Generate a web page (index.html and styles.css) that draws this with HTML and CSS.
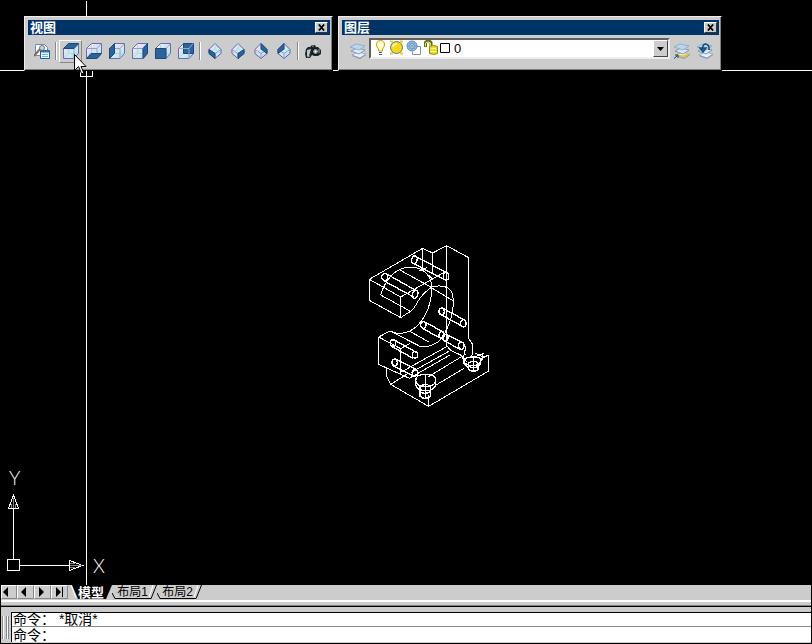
FILE: index.html
```html
<!DOCTYPE html>
<html lang="zh-CN">
<head>
<meta charset="utf-8">
<title>模型</title>
<link rel="stylesheet" href="styles.css">
</head>
<body>
<svg class="defs" aria-hidden="true">
  <defs>
    <linearGradient id="glass" x1="0" y1="0" x2="1" y2="1">
      <stop offset="0" stop-color="#fff"/><stop offset=".4" stop-color="#e0dcf8"/><stop offset=".6" stop-color="#c4f0f0"/><stop offset="1" stop-color="#ccc8f0"/>
    </linearGradient>
    <g id="cube">
      <path d="M.5 5.500 5.500.5h10v10l-4.500 5H.5z" fill="url(#glass)" stroke="#6c6cac"/>
      <path d="M1 15l4.500-4.500H15M5.500 1v9.500" fill="none" stroke="#a8dce0"/>
      <path d="M.5 5.500H11v10M11 5.500l4.500-5" fill="none" stroke="#9c9ccc"/>
    </g>
    <g id="gem">
      <path d="M8 .5 14 6.500v4L8 15.500l-6-5v-4z" fill="url(#glass)" stroke="#6464a4"/>
      <path d="M2 6.500 8 10.500l6-4M8 10.500v5" fill="none" stroke="#9494c4"/>
      <path d="M8 1v5M8 6l-5 4M8 6l5 4" fill="none" stroke="#a8e0e0"/>
    </g>
    <g id="sheets">
      <path d="M2 13l6-3 8 2-6 4z" fill="#7c98b4"/><path d="M2 12l6-3 8 2-6 4z" fill="#e4f0fc" stroke="#7890ac" stroke-width=".6"/>
      <path d="M1 8l6-3 8 2-6 4z" fill="#dce8f8" stroke="#6c8cac" stroke-width=".8"/>
      <path d="M0 4l6-3 9 2-6 4z" fill="#b8d8ec" stroke="#88a4c0" stroke-width=".8"/>
    </g>
  </defs>
</svg>

<main class="canvas">
  <i class="cross-v"></i><i class="cross-h"></i><i class="pickbox"></i>

  <svg class="part" viewBox="0 0 420 540" role="img" aria-label="零件">
    <path d="M28 133 188 40l30 14 42-22 66 36v242M28 133v63l94 52v-62zM122 186l138-78M188 40v60M218 54v60M260 32v300M122 248l28-18"/>
    <path d="M150 230q12-8 22-28 16-28 44-46 30-8 50 4 16 12 14 50-4 60-42 108-26 20-58 17M62 180l8-22q20-44 56-58 36-8 62 5 20 14 26 40 6 50-20 98-20 34-46 46-20 8-38 6"/>
    <path d="M62 180l88 48M80 142l40 22M118 104l94 52M214 158l66 40M178 108l22-10M216 130l-34-30M148 288l60 34"/>
    <path class="bold" d="M158 84l95 50M169 66l92 47M69 136l92 50M80 117l89 50M241 238l66 36M249 220l66 36M186 279l52 29M196 262l56 30M252 317l48 26M260 299l50 25M95 334l64 36M105 316l64 36M100 392l58 30M109 374l60 30"/>
    <g class="bold"><ellipse cx="163" cy="74" rx="8" ry="12" transform="rotate(20 163 74)"/><ellipse cx="258" cy="124" rx="8" ry="11"/><ellipse cx="74" cy="126" rx="9" ry="10"/><ellipse cx="165" cy="178" rx="8" ry="12" transform="rotate(20 165 178)"/><ellipse cx="245" cy="229" rx="8" ry="10"/><ellipse cx="310" cy="265" rx="8" ry="11"/><ellipse cx="190" cy="270" rx="8" ry="10"/><ellipse cx="245" cy="300" rx="8" ry="10"/><ellipse cx="256" cy="308" rx="8" ry="10"/><ellipse cx="304" cy="332" rx="8" ry="11"/><ellipse cx="99" cy="324" rx="8" ry="10"/><ellipse cx="165" cy="359" rx="8" ry="10"/><ellipse cx="104" cy="382" rx="8" ry="10"/><ellipse cx="165" cy="413" rx="8" ry="10"/></g>
    <path d="M90 288l90 46M56 306l34-18 20 7M56 306v82l92 42M56 306l66 35v78M122 341l28-16M80 397v28l12 23 114 66 180-106v-48l-16 6-24-12M92 448l48-30M122 412l140-78M148 430l122-70M154 412l114-64M205 425l113-68M228 450l84-50M206 480v34"/>
    <path d="M326 310l12 18v30l-12 12M260 332l12 14 30 14 8 14M318 334l-8 34 10 12M340 368l32-14M364 372l22-12M366 356v20"/>
    <path class="bold" d="M167 436q0-18 30-18t30 18-30 18-30-18zM167 436v12q0 16 30 20 30-4 30-20v-12M180 454v30q14 12 31 0v-30q-16-12-31 0zM180 470q16 10 31 0M196 418v70"/>
    <path class="bold" d="M312 378q0-12 28-12t22 12q-2 12-24 14-24-2-26-14zM326 384v20q14 10 28 0v-20q-14-10-28 0zM312 378v8l14 12M362 378v8l-8 10M326 394q14 8 28 0M340 366v42"/>
  </svg>

  <svg class="ucs" viewBox="0 0 120 125" role="img" aria-label="UCS">
    <path d="M13.500 99V48M20 105.500h49M7.500 99.500h12v11h-12zM8.500 48.500h10L13.500 35zM69.500 100.500v10l13-5z"/>
    <path class="dim" d="M13.500 38v10M11.500 44v4M15.500 44v4M70 105.500h12M70 103.500h5M70 107.500h5"/>
    <text x="9" y="25">Y</text><text x="93" y="113">X</text>
  </svg>

  <section class="toolbar view" aria-label="视图">
    <header class="title"><span>视图</span><button class="close" aria-label="关闭"><svg viewBox="0 0 8 7"><path d="M1 0l6 7M7 0L1 7"/></svg></button></header>
    <div class="tools">
      <button class="tool" aria-label="命名视图"><svg viewBox="0 0 16 16"><path d="M1.500 1.500h9l3 3v8h-12z" fill="#fff" stroke="#6090c0"/><path d="M0 13l6-7" stroke="#8c6848" stroke-width="2"/><circle cx="8" cy="5" r="2.500" fill="#c8d4dc" stroke="#847464"/><path d="M6.500 7.500h9v8h-9z" fill="#e8f8ff" stroke="#24589c"/><path d="M7 8.500h8" stroke="#3474b4" stroke-width="2"/><path d="M8 11.500h6M8 13.500h6" stroke="#74b4dc"/></svg></button>
      <i class="sep"></i>
      <button class="tool raised" aria-label="俯视图"><svg viewBox="0 0 16 16"><use href="#cube"/><path class="face" d="M.5 5.500 5.500.5h10L11 5.500z"/></svg></button>
      <button class="tool" aria-label="仰视图"><svg viewBox="0 0 16 16"><use href="#cube"/><path class="face" d="M.5 15.500 5 10.500h10.500l-4.500 5z"/></svg></button>
      <button class="tool" aria-label="左视图"><svg viewBox="0 0 16 16"><use href="#cube"/><path class="face" d="M.5 5.500 5.500.5v10l-5 5z"/></svg></button>
      <button class="tool" aria-label="右视图"><svg viewBox="0 0 16 16"><use href="#cube"/><path class="face" d="M11 5.500 15.500.5v10l-4.500 5z"/></svg></button>
      <button class="tool" aria-label="主视图"><svg viewBox="0 0 16 16"><use href="#cube"/><path class="face" d="M.5 5.500H11v10H.5z"/></svg></button>
      <button class="tool" aria-label="后视图"><svg viewBox="0 0 16 16"><use href="#cube"/><path class="face" d="M5.500.5h10v10h-10z"/><path d="M1 5.500h10v10M11 5.500l4-5" fill="none" stroke="#8cb0d8"/></svg></button>
      <i class="sep"></i>
      <button class="tool" aria-label="西南等轴测"><svg viewBox="0 0 16 16"><use href="#gem"/><path class="face" d="M2 6.500 8 10.500v5l-6-5z"/></svg></button>
      <button class="tool" aria-label="东南等轴测"><svg viewBox="0 0 16 16"><use href="#gem"/><path class="face" d="M14 6.500 8 10.500v5l6-5z"/></svg></button>
      <button class="tool" aria-label="东北等轴测"><svg viewBox="0 0 16 16"><use href="#gem"/><path class="face" d="M8 .5 14 6.500v4L8 6z"/></svg></button>
      <button class="tool" aria-label="西北等轴测"><svg viewBox="0 0 16 16"><use href="#gem"/><path class="face" d="M8 .5 2 6.500v4L8 6z"/></svg></button>
      <i class="sep"></i>
      <button class="tool" aria-label="相机"><svg viewBox="0 0 16 16"><path d="M1 6l2-2h2l2-2h3l1 2h2l3 3v4l-3 2h-4l-2-1-2 3H1L0 11z" fill="#202428"/><path d="M2 7v6h2l2-7z" fill="#b8c8cc"/><circle cx="10.500" cy="8.500" r="3" fill="#8ca4a4" stroke="#000"/><circle cx="10.500" cy="8.500" r="1" fill="#fff"/><path d="M14 6v4M7 3h2M2 14l3-1" stroke="#98a8a8"/></svg></button>
    </div>
  </section>

  <section class="toolbar layers" aria-label="图层">
    <header class="title"><span>图层</span><button class="close" aria-label="关闭"><svg viewBox="0 0 8 7"><path d="M1 0l6 7M7 0L1 7"/></svg></button></header>
    <div class="tools">
      <button class="tool" aria-label="图层特性管理器"><svg viewBox="0 0 16 16"><use href="#sheets"/></svg></button>
      <div class="combo">
        <select aria-label="图层"><option>0</option></select>
        <svg class="state" viewBox="0 0 76 16" aria-hidden="true">
          <path d="M2.500 5q0-4.500 4-4.500t4 4.500q0 2-2 4v2h-4V9q-2-2-2-4z" fill="#fffcc0" stroke="#c8a018"/><path d="M5 12.500h3M5 14.500h3" stroke="#505878"/><path d="M5 4l1.500 3L8 4" fill="none" stroke="#fff"/>
          <path d="M16 1.500h3M26 1.500h3M16 13.500h3M26 13.500h3" stroke="#f0cc20" stroke-width="2"/><circle cx="22.500" cy="7.500" r="6" fill="#ffd414" stroke="#4880a0"/><path d="M19 7q0-3 4-3" fill="none" stroke="#fff49c" stroke-width="2"/>
          <path d="M40.500 6.500h6v8h-8v-3" fill="#fff" stroke="#8494b0"/><circle cx="38" cy="6" r="5" fill="#94bce4" stroke="#6090bc"/><circle cx="38" cy="6" r="2.500" fill="#d8f0f8" stroke="#6094bc"/><path d="M38 1v10M33 6h10M35 3l6 6M41 3l-6 6" stroke="#7498c0" stroke-width=".7"/>
          <path d="M51.500 7V2.500Q54-.5 57 2.500V6" fill="none" stroke="#606c18" stroke-width="3"/><path d="M51.500 6.500V3Q54 .5 56.500 3v3" fill="none" stroke="#dcec48"/><path d="M55.500 6.500q4-2 8 0v7q-4 2-8 0z" fill="#e8dc24" stroke="#908c14"/><path d="M57 8.500h5M57 11.500h5" stroke="#fffca0"/>
          <path d="M66.500 3.500h9v9h-9z" fill="#fff" stroke="#000"/>
        </svg>
        <svg class="drop" viewBox="0 0 13 15" aria-hidden="true"><path d="M3 6h7L6.500 10z"/></svg>
      </div>
      <button class="tool" aria-label="置为当前图层"><svg viewBox="0 0 16 16"><use href="#sheets"/><path d="M3 11l6 1.500 6-3 1 1-6 4-8-2z" fill="#f0c818"/><path d="M0 15.500l3.500-3M1 12h3v3" stroke="#104478" fill="none"/></svg></button>
      <button class="tool" aria-label="上一个图层"><svg viewBox="0 0 16 16"><use href="#sheets"/><path d="M12 7V4q-1-3-4-3-3 1-2 6M3 5l3 4 3-4z" stroke="#104c80" stroke-width="1.500" fill="none"/></svg></button>
    </div>
  </section>

  <svg class="cursor" viewBox="0 0 13 20" aria-hidden="true"><path d="M.5.5v16l4-4 3 7h2.500l-3-7H12z" fill="#fff" stroke="#000"/></svg>
</main>

<nav class="tabs" aria-label="布局">
  <button class="nav" aria-label="第一个"><svg viewBox="0 0 15 12"><path d="M6 1v10L1 6z"/></svg></button>
  <button class="nav" aria-label="上一个"><svg viewBox="0 0 15 12"><path d="M8 1v10L3 6z"/></svg></button>
  <button class="nav" aria-label="下一个"><svg viewBox="0 0 15 12"><path d="M4 1v10l5-5z"/></svg></button>
  <button class="nav" aria-label="最后一个"><svg viewBox="0 0 15 12"><path d="M4 1v10l5-5zM10 1h1v10h-1z"/></svg></button>
  <button class="tab active"><svg viewBox="0 0 42 15" preserveAspectRatio="none"><path d="M2 0h40l-6 14H8z"/><path class="edge" d="M1 0l5 13"/></svg><span>模型</span></button>
  <button class="tab"><svg viewBox="0 0 46 15" preserveAspectRatio="none"><path class="edge" d="M42 0l-4 12"/><path class="line" d="M0 8l3 5.500h37L45.500 0"/></svg><span>布局1</span></button>
  <button class="tab"><svg viewBox="0 0 46 15" preserveAspectRatio="none"><path class="edge" d="M42 0l-4 12"/><path class="line" d="M0 8l3 5.500h37L45.500 0"/></svg><span>布局2</span></button>
</nav>
<div class="splitter"></div>
<section class="command">
  <i class="grip"></i>
  <div class="lines">
    <p class="history">命令：&nbsp;*取消*</p>
    <div class="prompt"><label for="cmd">命令：</label><input id="cmd" type="text"></div>
  </div>
</section>
</body>
</html>
```
FILE: styles.css
```css
* { box-sizing: border-box; }
body {
  margin: 0; min-height: 100vh; padding: 0 1px 1px;
  display: flex; flex-direction: column;
  background: #000; color: #000;
  font: 12px/15px "Liberation Sans", "Noto Sans CJK SC", sans-serif;
}
button { margin: 0; padding: 0; border: 0; background: none; font: inherit; color: inherit; }
svg { display: block; }
.defs { position: absolute; width: 0; height: 0; }

.canvas { position: relative; flex: 1; min-height: 480px; margin: 0 -1px; overflow: hidden; }
.cross-v { position: absolute; left: 86px; top: 1px; bottom: 0; width: 1px; background: #fff; }
.cross-h { position: absolute; top: 70px; left: 0; right: 0; height: 1px; background: #fff; }
.pickbox { position: absolute; left: 80px; top: 64px; width: 13px; height: 13px; border: 1px solid #fff; }
.part { position: absolute; left: 360px; top: 235px; width: 140px; height: 180px; shape-rendering: crispEdges; }
.part path, .part ellipse { fill: none; stroke: #fff; stroke-width: 3; }
.part .bold, .part .bold ellipse { stroke-width: 4; }
.ucs { position: absolute; left: 0; bottom: 0; width: 120px; height: 125px; }
.ucs path { fill: none; stroke: #fff; shape-rendering: crispEdges; }
.ucs .dim { stroke: #888; }
.ucs text { fill: #fff; font: 300 19px Lato, sans-serif; }
.cursor { position: absolute; left: 74px; top: 54px; width: 13px; height: 20px; }

.toolbar {
  position: absolute; top: 16px; height: 55px; padding: 3px 2px 0 3px;
  background: #ccc; border: 1px solid; border-color: #eee #000 #000 #eee;
  box-shadow: inset -1px -1px #808080;
}
.view { left: 24px; width: 309px; }
.layers { left: 338px; width: 384px; }
.title {
  display: flex; align-items: center; justify-content: space-between;
  height: 15px; padding: 0 2px; background: #003366; color: #fff;
  font-weight: 700; font-size: 13px;
}
.close {
  width: 13px; height: 11px; padding: 1px 2px; background: #ccc;
  border: 1px solid; border-color: #fff #333 #333 #fff;
}
.close svg { width: 7px; height: 7px; }
.close path { stroke: #000; stroke-width: 2; }
.tools { display: flex; align-items: center; height: 32px; padding-left: 2px; }
.layers .tools { padding: 0 3px 0 4px; }
.tool { width: 23px; height: 23px; display: grid; place-items: center; border: 1px solid transparent; }
.tool svg { width: 16px; height: 16px; }
.raised { border-color: #fff #888 #888 #fff; }
.face { fill: #2c6498; stroke: #1c4880; }
.sep { width: 2px; height: 18px; margin: 0 2px; border-left: 1px solid #888; border-right: 1px solid #fff; }

.combo { position: relative; flex: 1; height: 21px; margin-bottom: 5px; }
.combo select {
  appearance: none; width: 100%; height: 100%; padding: 0 18px 0 83px;
  border: 2px solid; border-color: #606060 #eee #eee #606060; border-radius: 0;
  background: #fff; color: #000; font: 13px "Liberation Sans", sans-serif;
}
.state { position: absolute; left: 5px; top: 2px; width: 76px; height: 16px; pointer-events: none; }
.drop {
  position: absolute; right: 2px; top: 2px; width: 15px; height: 17px; pointer-events: none;
  background: #ccc; border: 1px solid; border-color: #fff #444 #444 #fff;
}

.tabs { display: flex; height: 15px; background: #ccc; }
.nav { width: 17px; height: 14px; border: 1px solid; border-color: #fff #888 #888 #fff; }
.nav svg { width: 15px; height: 12px; }
.nav:first-child { width: 16px; }
.tab { position: relative; width: 45px; height: 15px; padding-right: 4px; line-height: 13px; }
.tab svg { position: absolute; left: 0; top: 0; width: 100%; height: 100%; }
.tab span { position: relative; }
.tab .line { fill: none; stroke: #000; }
.tab .edge { fill: none; stroke: #fff; }
.active { width: 42px; margin-left: 2px; padding: 0; color: #fff; font-weight: 700; font-size: 13px; }

.splitter { height: 7px; background: #ccc; border-top: 2px solid #fff; border-bottom: 1px solid #000; box-shadow: inset 0 -1px #808080; }
.command { display: flex; padding: 5px 0 1px; background: #ccc; }
.grip { width: 7px; margin: 4px 2px 3px 1px; border: solid #888; border-width: 0 1px; background: linear-gradient(90deg, #fff 1px, #ccc 1px 3px, #888 3px 4px, #fff 4px); }
.lines { flex: 1; min-width: 0; background: #fff; border: solid #000; border-width: 1px 0 0 1px; font-size: 14px; }
.history { margin: 0; height: 14px; padding-left: 1px; line-height: 13px; border-bottom: 1px solid #888; }
.prompt { display: flex; height: 15px; padding-left: 1px; line-height: 17px; }
.prompt input { flex: 1; min-width: 0; padding: 0; border: 0; outline: 0; background: none; font: inherit; }
```
